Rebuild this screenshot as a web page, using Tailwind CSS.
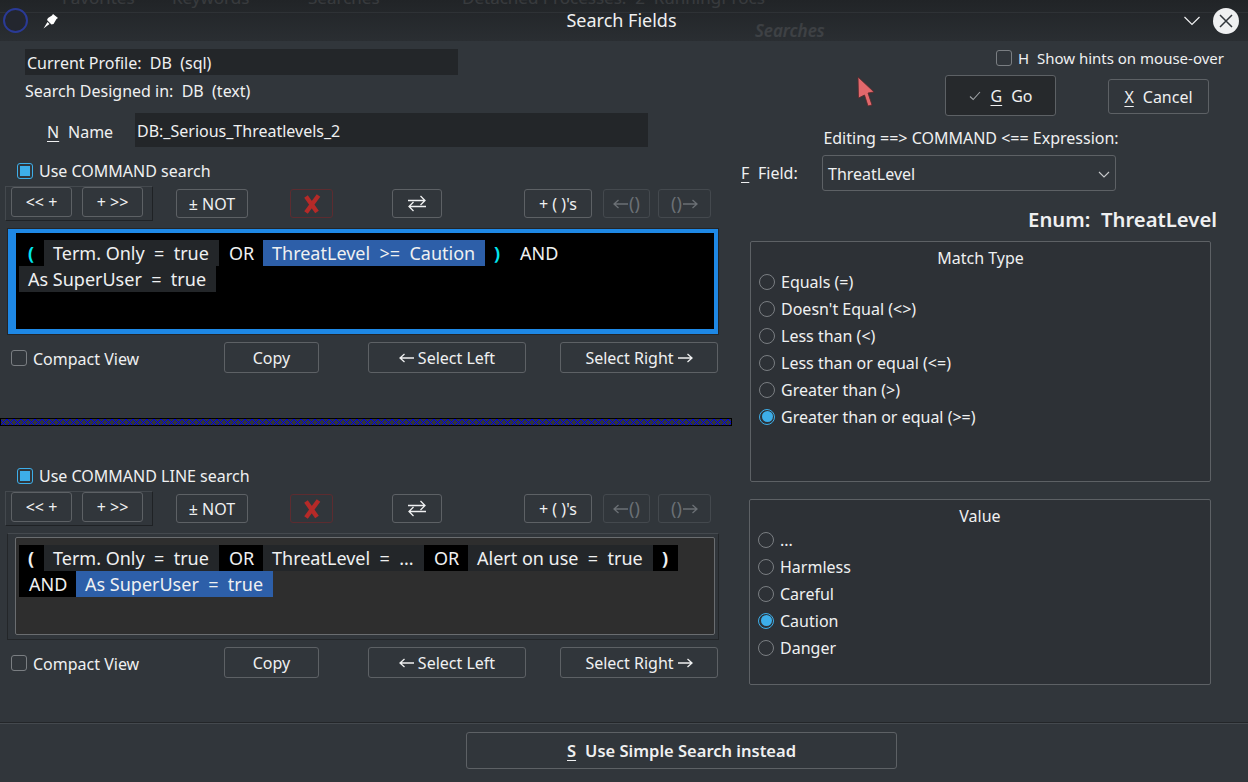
<!DOCTYPE html>
<html lang="en">
  <head>
    <meta charset="UTF-8" />
    <title>Search Fields</title>
    <script src="https://cdn.jsdelivr.net/npm/@tailwindcss/browser@4"></script>
  </head>
  <body class="bg-[#31363b] overflow-hidden">
    <div class="relative w-[1248px] h-[782px] bg-[#31363b] text-[#eff0f1] text-[16px] font-['Noto_Sans',sans-serif] overflow-hidden">
      <!-- Title bar, with the window behind showing through -->
      <header class="relative flex items-center h-[41px] bg-gradient-to-b from-[#212427] to-[#2a2e32]">
        <div class="absolute inset-0 text-white/10 text-[17px] overflow-hidden">
          <span class="absolute left-[62px] top-[-15px]">Favorites</span>
          <span class="absolute left-[172px] top-[-15px]">Keywords</span>
          <span class="absolute left-[308px] top-[-15px]">Searches</span>
          <span class="absolute left-[462px] top-[-15px] whitespace-pre">Detached Processes:  2  RunningProcs</span>
          <span class="absolute left-[755px] top-[18px] italic font-semibold">Searches</span>
          <div class="absolute left-0 right-0 top-[12px] h-px bg-white/5"></div>
        </div>
        <div class="relative flex items-center w-[60px] h-full">
          <div class="ml-[3px] w-[25px] h-[25px] rounded-full border-2 border-[#2a3a96] bg-[#23262e]"></div>
          <svg class="ml-[15px]" width="16" height="16" viewBox="0 0 16 16" fill="#fff">
            <path d="M10 1 L15 5 L13.5 6 L10.5 11 L8.5 11.5 L4 7 L5 5 L9 2.5 Z" />
            <path d="M4.5 9 L6.5 11 L0.5 15.5 Z" />
          </svg>
        </div>
        <div class="relative flex-1 text-center text-[18px]">Search Fields</div>
        <div class="relative flex items-center w-[65px] h-full">
          <svg class="ml-[1px]" width="16" height="10" viewBox="0 0 16 10" fill="none" stroke="#eff0f1" stroke-width="1.2">
            <path d="M0.5 1 L8 8.5 L15.5 1" />
          </svg>
          <div class="ml-[13px] flex items-center justify-center w-[26px] h-[26px] rounded-full bg-[#eff0f1]">
            <svg width="14" height="14" viewBox="0 0 14 14" fill="none" stroke="#31363b" stroke-width="1.5">
              <path d="M1 1 L13 13 M13 1 L1 13" />
            </svg>
          </div>
        </div>
      </header>

      <main class="flex h-[681px]">
        <!-- Left column: the two expression editors -->
        <section class="w-[732px] shrink-0 pt-[8px]">
          <div class="ml-[25px] w-[433px] h-[26px] pl-[2px] pt-[2px] flex items-center bg-[#232629] whitespace-pre">Current Profile:  DB  (sql)</div>
          <div class="mt-[5px] ml-[25px] h-[22px] flex items-center whitespace-pre">Search Designed in:  DB  (text)</div>
          <div class="mt-[11px] h-[34px] flex items-center">
            <span class="ml-[47px] w-[21px] mt-[3px]"><span class="underline underline-offset-3">N</span></span>
            <span class="w-[67px] mt-[3px]">Name</span>
            <div class="w-[513px] h-full pl-[2px] pt-[2px] flex items-center bg-[#232629]">DB:_Serious_Threatlevels_2</div>
          </div>

          <div class="mt-[14px] h-[20px] flex items-center">
            <div class="ml-[17px] w-4 h-4 rounded-[3px] border border-[#3daee9] flex items-center justify-center"><div class="w-[10px] h-[10px] bg-[#3daee9]"></div></div>
            <span class="ml-[6px]">Use COMMAND search</span>
          </div>
          <div class="mt-[5px] h-[35px] flex items-start">
            <div class="ml-[5px] w-[148px] h-[35px] pl-[5px] flex gap-[10px] border border-[#44494e] border-r-[#1f2225] border-b-[#1f2225]">
              <div class="w-[61px] h-[30px] flex items-center justify-center border border-[#5d6165] rounded-[3px]">&lt;&lt; +</div>
              <div class="w-[61px] h-[30px] flex items-center justify-center border border-[#5d6165] rounded-[3px]">+ &gt;&gt;</div>
            </div>
            <div class="ml-[23px] mt-[3px] w-[72px] h-[29px] flex items-center justify-center border border-[#5d6165] rounded-[3px]">± NOT</div>
            <div class="ml-[42px] mt-[3px] w-[43px] h-[29px] flex items-center justify-center border border-[#5c2c30] rounded-[3px]">
              <svg width="18" height="20" viewBox="0 0 18 20" fill="none" stroke="#b52a28" stroke-width="4.4"><path d="M3 2.5 L14 18 M15.5 1.5 L3 18.5" /></svg>
            </div>
            <div class="ml-[59px] mt-[3px] w-[50px] h-[29px] flex items-center justify-center border border-[#5d6165] rounded-[3px]">
              <svg width="18" height="17" viewBox="0 0 18 17" fill="none" stroke="#eff0f1" stroke-width="1.3"><path d="M0 5.5 H17 M12.5 1 L17 5.5 L12.5 10 M18 11.5 H1 M5.5 7 L1 11.5 L5.5 16" /></svg>
            </div>
            <div class="ml-[82px] mt-[3px] w-[68px] h-[29px] flex items-center justify-center border border-[#5d6165] rounded-[3px]">+ ( )'s</div>
            <div class="ml-[11px] mt-[3px] w-[47px] h-[29px] flex items-center justify-center gap-px border border-[#44494e] rounded-[3px] text-[#6b7075] text-[18px]">
              <svg width="15" height="10" viewBox="0 0 15 10" fill="none" stroke="#6b7075" stroke-width="1.3"><path d="M15 5 H1 M5.5 1 L1 5 L5.5 9" /></svg>
              <span>()</span>
            </div>
            <div class="ml-[8px] mt-[3px] w-[53px] h-[29px] flex items-center justify-center gap-px border border-[#44494e] rounded-[3px] text-[#6b7075] text-[18px]">
              <span>()</span>
              <svg width="15" height="10" viewBox="0 0 15 10" fill="none" stroke="#6b7075" stroke-width="1.3"><path d="M0 5 H14 M9.5 1 L14 5 L9.5 9" /></svg>
            </div>
          </div>

          <div class="mt-[8px] ml-[8px] w-[710px] h-[105px] bg-black border-[#1e88e5] border-t-4 border-b-[5px] border-r-4 border-l-[8px] shadow-[0_0_0_1px_#232629]">
            <div class="flex flex-wrap content-start pt-[7px] pl-[3px] text-[18px] whitespace-pre">
              <span class="h-[26px] px-[9px] flex items-center w-[25px] text-[#00e5ee] font-bold">(</span>
              <span class="h-[26px] px-[9px] flex items-center w-[175px] bg-[#232629]">Term. Only  =  true</span>
              <span class="h-[26px] px-[10px] flex items-center w-[44px]">OR</span>
              <span class="h-[26px] px-[9px] flex items-center w-[222px] bg-[#2d5fa9]">ThreatLevel  &gt;=  Caution</span>
              <span class="h-[26px] px-[9px] flex items-center w-[25px] text-[#00e5ee] font-bold">)</span>
              <span class="h-[26px] px-[10px] flex items-center">AND</span>
              <div class="w-full"></div>
              <span class="h-[26px] px-[9px] flex items-center w-[197px] bg-[#232629]">As SuperUser  =  true</span>
            </div>
          </div>
          <div class="mt-[8px] h-[31px] flex items-center">
            <div class="ml-[11px] w-4 h-4 rounded-[3px] border border-[#7a7e82] shrink-0"></div>
            <span class="ml-[6px] w-[191px] pt-[2px]">Compact View</span>
            <div class="w-[95px] h-full flex items-center justify-center border border-[#5d6165] rounded-[3px]">Copy</div>
            <div class="ml-[49px] w-[158px] h-full flex items-center justify-center gap-1 border border-[#5d6165] rounded-[3px]">
              <svg width="15" height="10" viewBox="0 0 15 10" fill="none" stroke="#eff0f1" stroke-width="1.3"><path d="M15 5 H1 M5.5 1 L1 5 L5.5 9" /></svg>
              <span>Select Left</span>
            </div>
            <div class="ml-[34px] w-[158px] h-full flex items-center justify-center gap-1 border border-[#5d6165] rounded-[3px]">
              <span>Select Right</span>
              <svg width="15" height="10" viewBox="0 0 15 10" fill="none" stroke="#eff0f1" stroke-width="1.3"><path d="M0 5 H14 M9.5 1 L14 5 L9.5 9" /></svg>
            </div>
          </div>

          <!-- Splitter -->
          <svg class="block mt-[45px]" width="732" height="8" shape-rendering="crispEdges">
            <defs>
              <pattern id="splitter" width="7" height="6" patternUnits="userSpaceOnUse" y="1">
                <path fill="#0000f0" d="M0 0h1v1h-1z M6 0h1v1h-1z M1 1h1v1h-1z M5 1h1v1h-1z M2 2h1v1h-1z M4 2h1v1h-1z M3 3h1v1h-1z M2 4h1v1h-1z M4 4h1v1h-1z M1 5h1v1h-1z M5 5h1v1h-1z" />
              </pattern>
            </defs>
            <rect width="732" height="8" fill="#000" />
            <rect x="1" y="1" width="730" height="6" fill="#31363b" />
            <rect x="1" y="1" width="730" height="6" fill="url(#splitter)" />
          </svg>

          <div class="mt-[40px] h-[20px] flex items-center">
            <div class="ml-[17px] w-4 h-4 rounded-[3px] border border-[#3daee9] flex items-center justify-center"><div class="w-[10px] h-[10px] bg-[#3daee9]"></div></div>
            <span class="ml-[6px]">Use COMMAND LINE search</span>
          </div>
          <div class="mt-[5px] h-[35px] flex items-start">
            <div class="ml-[5px] w-[148px] h-[35px] pl-[5px] flex gap-[10px] border border-[#44494e] border-r-[#1f2225] border-b-[#1f2225]">
              <div class="w-[61px] h-[30px] flex items-center justify-center border border-[#5d6165] rounded-[3px]">&lt;&lt; +</div>
              <div class="w-[61px] h-[30px] flex items-center justify-center border border-[#5d6165] rounded-[3px]">+ &gt;&gt;</div>
            </div>
            <div class="ml-[23px] mt-[3px] w-[72px] h-[29px] flex items-center justify-center border border-[#5d6165] rounded-[3px]">± NOT</div>
            <div class="ml-[42px] mt-[3px] w-[43px] h-[29px] flex items-center justify-center border border-[#5c2c30] rounded-[3px]">
              <svg width="18" height="20" viewBox="0 0 18 20" fill="none" stroke="#b52a28" stroke-width="4.4"><path d="M3 2.5 L14 18 M15.5 1.5 L3 18.5" /></svg>
            </div>
            <div class="ml-[59px] mt-[3px] w-[50px] h-[29px] flex items-center justify-center border border-[#5d6165] rounded-[3px]">
              <svg width="18" height="17" viewBox="0 0 18 17" fill="none" stroke="#eff0f1" stroke-width="1.3"><path d="M0 5.5 H17 M12.5 1 L17 5.5 L12.5 10 M18 11.5 H1 M5.5 7 L1 11.5 L5.5 16" /></svg>
            </div>
            <div class="ml-[82px] mt-[3px] w-[68px] h-[29px] flex items-center justify-center border border-[#5d6165] rounded-[3px]">+ ( )'s</div>
            <div class="ml-[11px] mt-[3px] w-[47px] h-[29px] flex items-center justify-center gap-px border border-[#44494e] rounded-[3px] text-[#6b7075] text-[18px]">
              <svg width="15" height="10" viewBox="0 0 15 10" fill="none" stroke="#6b7075" stroke-width="1.3"><path d="M15 5 H1 M5.5 1 L1 5 L5.5 9" /></svg>
              <span>()</span>
            </div>
            <div class="ml-[8px] mt-[3px] w-[53px] h-[29px] flex items-center justify-center gap-px border border-[#44494e] rounded-[3px] text-[#6b7075] text-[18px]">
              <span>()</span>
              <svg width="15" height="10" viewBox="0 0 15 10" fill="none" stroke="#6b7075" stroke-width="1.3"><path d="M0 5 H14 M9.5 1 L14 5 L9.5 9" /></svg>
            </div>
          </div>

          <div class="mt-[7px] ml-[7px] w-[712px] h-[107px] p-[3px_3px_4px_7px] border border-[#232629] border-t-[#44494e]">
            <div class="h-full flex flex-wrap content-start pt-[7px] pl-[3px] bg-[#2e2e2e] border border-[#6a6d70] rounded-[2px] text-[18px] whitespace-pre">
              <span class="h-[26px] px-[9px] flex items-center w-[25px] bg-black font-bold">(</span>
              <span class="h-[26px] px-[9px] flex items-center w-[175px] bg-[#232629]">Term. Only  =  true</span>
              <span class="h-[26px] px-[10px] flex items-center w-[44px] bg-black">OR</span>
              <span class="h-[26px] px-[9px] flex items-center w-[161px] bg-[#232629]">ThreatLevel  =  ...</span>
              <span class="h-[26px] px-[10px] flex items-center w-[44px] bg-black">OR</span>
              <span class="h-[26px] px-[9px] flex items-center w-[185px] bg-[#232629]">Alert on use  =  true</span>
              <span class="h-[26px] px-[9px] flex items-center w-[25px] bg-black font-bold">)</span>
              <div class="w-full"></div>
              <span class="h-[26px] px-[10px] flex items-center w-[57px] bg-black">AND</span>
              <span class="h-[26px] px-[9px] flex items-center w-[197px] bg-[#2d5fa9]">As SuperUser  =  true</span>
            </div>
          </div>
          <div class="mt-[7px] h-[31px] flex items-center">
            <div class="ml-[11px] w-4 h-4 rounded-[3px] border border-[#7a7e82] shrink-0"></div>
            <span class="ml-[6px] w-[191px] pt-[2px]">Compact View</span>
            <div class="w-[95px] h-full flex items-center justify-center border border-[#5d6165] rounded-[3px]">Copy</div>
            <div class="ml-[49px] w-[158px] h-full flex items-center justify-center gap-1 border border-[#5d6165] rounded-[3px]">
              <svg width="15" height="10" viewBox="0 0 15 10" fill="none" stroke="#eff0f1" stroke-width="1.3"><path d="M15 5 H1 M5.5 1 L1 5 L5.5 9" /></svg>
              <span>Select Left</span>
            </div>
            <div class="ml-[34px] w-[158px] h-full flex items-center justify-center gap-1 border border-[#5d6165] rounded-[3px]">
              <span>Select Right</span>
              <svg width="15" height="10" viewBox="0 0 15 10" fill="none" stroke="#eff0f1" stroke-width="1.3"><path d="M0 5 H14 M9.5 1 L14 5 L9.5 9" /></svg>
            </div>
          </div>
        </section>

        <!-- Right column: field, match type and value -->
        <section class="flex-1 pt-[7px]">
          <div class="h-[20px] flex items-center">
            <div class="ml-[264px] w-4 h-4 rounded-[3px] border border-[#7a7e82]"></div>
            <span class="ml-[6px] text-[15px] whitespace-pre">H  Show hints on mouse-over</span>
          </div>
          <div class="mt-[7px] h-[41px] flex items-start">
            <div class="ml-[213px] w-[111px] h-[41px] flex items-center justify-center bg-[#26292c] border border-[#5d6165] rounded-[3px]">
              <svg width="12" height="10" viewBox="0 0 12 10" fill="none" stroke="#a0a4a8" stroke-width="1.1"><path d="M1 5.5 L4.2 8.5 L11 1" /></svg>
              <span class="ml-[10px] underline underline-offset-3">G</span><span class="ml-[9px]">Go</span>
            </div>
            <div class="ml-[52px] mt-[4px] w-[101px] h-[35px] flex items-center justify-center border border-[#5d6165] rounded-[3px]">
              <span class="underline underline-offset-3">X</span><span class="ml-[9px]">Cancel</span>
            </div>
          </div>
          <div class="mt-[11px] ml-[2px] h-[22px] w-[474px] flex items-center justify-center">Editing ==&gt; COMMAND &lt;== Expression:</div>
          <div class="mt-[6px] h-[36px] flex items-center">
            <span class="ml-[9px] w-[17px]"><span class="underline underline-offset-3">F</span></span>
            <span class="w-[64px]">Field:</span>
            <div class="w-[294px] h-full pl-[5px] pr-[5px] pt-[2px] flex items-center justify-between border border-[#5d6165] rounded-[3px]">
              <span>ThreatLevel</span>
              <svg width="12" height="7" viewBox="0 0 12 7" fill="none" stroke="#c8cacc" stroke-width="1.1"><path d="M1 1 L6 6 L11 1" /></svg>
            </div>
          </div>
          <div class="mt-[13px] mb-[7px] w-[485px] h-[30px] flex items-center justify-end text-[20.3px] font-semibold whitespace-pre">Enum:  ThreatLevel</div>

          <div class="ml-[18px] w-[461px] h-[241px] pt-[5px] border border-[#5d6165] rounded-[2px] bg-[#2d3136]">
            <div class="h-[22px] flex items-center justify-center">Match Type</div>
            <div class="mt-[-1px] pl-[8px] flex flex-col">
              <label class="h-[27px] flex items-center gap-[6px]"><span class="w-4 h-4 rounded-full border border-[#7a7e82]"></span>Equals (=)</label>
              <label class="h-[27px] flex items-center gap-[6px]"><span class="w-4 h-4 rounded-full border border-[#7a7e82]"></span>Doesn't Equal (&lt;&gt;)</label>
              <label class="h-[27px] flex items-center gap-[6px]"><span class="w-4 h-4 rounded-full border border-[#7a7e82]"></span>Less than (&lt;)</label>
              <label class="h-[27px] flex items-center gap-[6px]"><span class="w-4 h-4 rounded-full border border-[#7a7e82]"></span>Less than or equal (&lt;=)</label>
              <label class="h-[27px] flex items-center gap-[6px]"><span class="w-4 h-4 rounded-full border border-[#7a7e82]"></span>Greater than (&gt;)</label>
              <label class="h-[27px] flex items-center gap-[6px]"><span class="w-4 h-4 rounded-full border border-[#3daee9] flex items-center justify-center"><span class="w-[11px] h-[11px] rounded-full bg-[#3daee9]"></span></span>Greater than or equal (&gt;=)</label>
            </div>
          </div>

          <div class="mt-[17px] ml-[17px] w-[462px] h-[186px] pt-[5px] border border-[#5d6165] rounded-[2px] bg-[#2d3136]">
            <div class="h-[22px] flex items-center justify-center">Value</div>
            <div class="mt-[-1px] pl-[8px] flex flex-col">
              <label class="h-[27px] flex items-center gap-[6px]"><span class="w-4 h-4 rounded-full border border-[#7a7e82]"></span>...</label>
              <label class="h-[27px] flex items-center gap-[6px]"><span class="w-4 h-4 rounded-full border border-[#7a7e82]"></span>Harmless</label>
              <label class="h-[27px] flex items-center gap-[6px]"><span class="w-4 h-4 rounded-full border border-[#7a7e82]"></span>Careful</label>
              <label class="h-[27px] flex items-center gap-[6px]"><span class="w-4 h-4 rounded-full border border-[#3daee9] flex items-center justify-center"><span class="w-[11px] h-[11px] rounded-full bg-[#3daee9]"></span></span>Caution</label>
              <label class="h-[27px] flex items-center gap-[6px]"><span class="w-4 h-4 rounded-full border border-[#7a7e82]"></span>Danger</label>
            </div>
          </div>
        </section>
      </main>

      <!-- Footer -->
      <footer class="h-[60px] pt-[9px] border-t border-[#232629] shadow-[inset_0_1px_0_#44494e]">
        <div class="ml-[466px] w-[431px] h-[37px] pt-[2px] flex items-center justify-center border border-[#5d6165] rounded-[3px] font-semibold text-[16.5px]">
          <span class="underline underline-offset-3">S</span><span class="ml-[9px]">Use Simple Search instead</span>
        </div>
      </footer>

      <!-- Mouse pointer over the dialog -->
      <svg class="absolute left-[857px] top-[76px]" width="20" height="32" viewBox="0 0 20 32">
        <path d="M1 1 L17 16 L11 17 L15 29 L11 30 L7.5 19 L1.5 22 Z" fill="#e2686c" stroke="#5a2a2c" stroke-width="0.8" />
      </svg>
    </div>
  </body>
</html>
